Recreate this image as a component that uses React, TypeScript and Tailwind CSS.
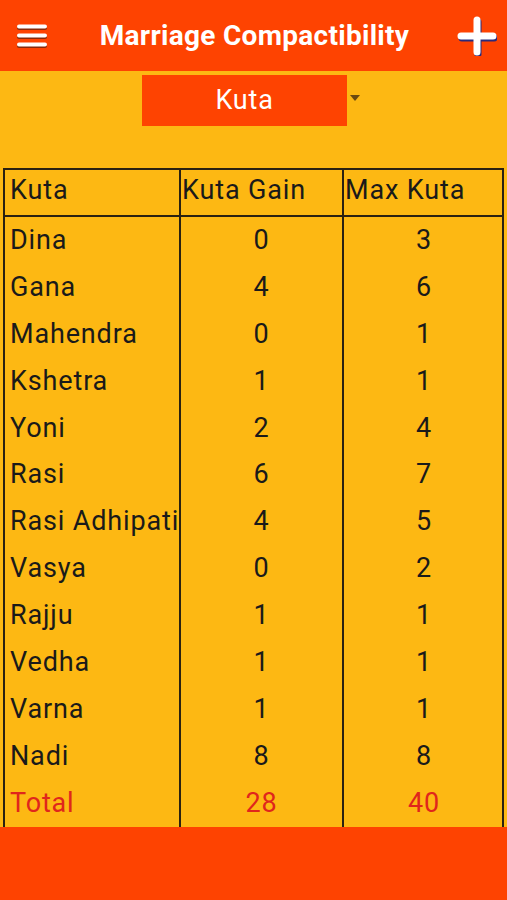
import React from "react";

const rows: [string, number, number][] = [
  ["Dina", 0, 3],
  ["Gana", 4, 6],
  ["Mahendra", 0, 1],
  ["Kshetra", 1, 1],
  ["Yoni", 2, 4],
  ["Rasi", 6, 7],
  ["Rasi Adhipati", 4, 5],
  ["Vasya", 0, 2],
  ["Rajju", 1, 1],
  ["Vedha", 1, 1],
  ["Varna", 1, 1],
  ["Nadi", 8, 8],
];

function Row({ name, gain, max, total }: { name: string; gain: number; max: number; total?: boolean }) {
  const color = total ? "text-[#e0261c]" : "text-[#1a1a1a]";
  return (
    <div className={`grid grid-cols-[174px_2px_161px_2px_160px] h-[46.9px] items-center ${color}`}>
      <div className="pl-[5px] whitespace-nowrap overflow-visible">{name}</div>
      <div className="h-full bg-[#2a2111] relative z-10" />
      <div className="text-center">{gain}</div>
      <div className="h-full bg-[#2a2111]" />
      <div className="text-center">{max}</div>
    </div>
  );
}

export default function App() {
  return (
    <div className="w-[507px] h-[900px] flex flex-col bg-[#fdb813] font-['Roboto',sans-serif] overflow-hidden">
      <header className="h-[71px] bg-[#fe4301] flex items-center justify-between px-[16px] shrink-0">
        <svg width="32" height="26" viewBox="0 0 32 26">
          <g fill="#3a1a10" opacity="0.6">
            <rect x="1" y="3" width="30" height="4" rx="2" />
            <rect x="1" y="12" width="30" height="4" rx="2" />
            <rect x="1" y="21" width="30" height="4" rx="2" />
          </g>
          <g fill="#fff">
            <rect x="1" y="1.5" width="30" height="4" rx="2" />
            <rect x="1" y="10.5" width="30" height="4" rx="2" />
            <rect x="1" y="19.5" width="30" height="4" rx="2" />
          </g>
        </svg>
        <h1 className="text-white font-bold text-[28px] tracking-[0.3px] ml-[4px] mt-[1px]">Marriage Compactibility</h1>
        <svg width="40" height="40" viewBox="0 0 40 40" className="-mr-[6px]">
          <path d="M20 4v32M4 20h32" stroke="#2a2a7a" strokeWidth="7" strokeLinecap="round" transform="translate(1 2)" />
          <path d="M20 4v32M4 20h32" stroke="#fff" strokeWidth="7" strokeLinecap="round" />
        </svg>
      </header>

      <div className="flex justify-center items-center h-[97px] shrink-0 pb-[42px] pt-[3px] pr-[18px]">
        <div className="w-[205px] h-[51px] bg-[#fe4301] flex items-center justify-center text-white text-[27px] tracking-[0.8px]">
          Kuta
        </div>
        <svg width="10" height="6" viewBox="0 0 10 6" className="ml-[3px] mr-[-13px] mb-[4px]">
          <path d="M0 0h10L5 6z" fill="#6b4a10" />
        </svg>
      </div>

      <div className="ml-[3px] w-[501px] flex-1 border-x-2 border-t-2 border-[#2a2111] text-[27px] tracking-[0.85px] leading-none">
        <div className="grid grid-cols-[174px_2px_161px_2px_160px] h-[47px] items-center border-b-2 border-[#2a2111] text-[#1a1a1a]">
          <div className="pl-[5px] pb-[4px]">Kuta</div>
          <div className="h-full bg-[#2a2111]" />
          <div className="pl-[1px] pb-[4px]">Kuta Gain</div>
          <div className="h-full bg-[#2a2111]" />
          <div className="pl-[1px] pb-[4px]">Max Kuta</div>
        </div>
        {rows.map(([n, g, m]) => (
          <Row key={n} name={n} gain={g} max={m} />
        ))}
        <Row name="Total" gain={28} max={40} total />
      </div>

      <footer className="h-[74px] bg-[#fe4301] shrink-0" />
    </div>
  );
}
